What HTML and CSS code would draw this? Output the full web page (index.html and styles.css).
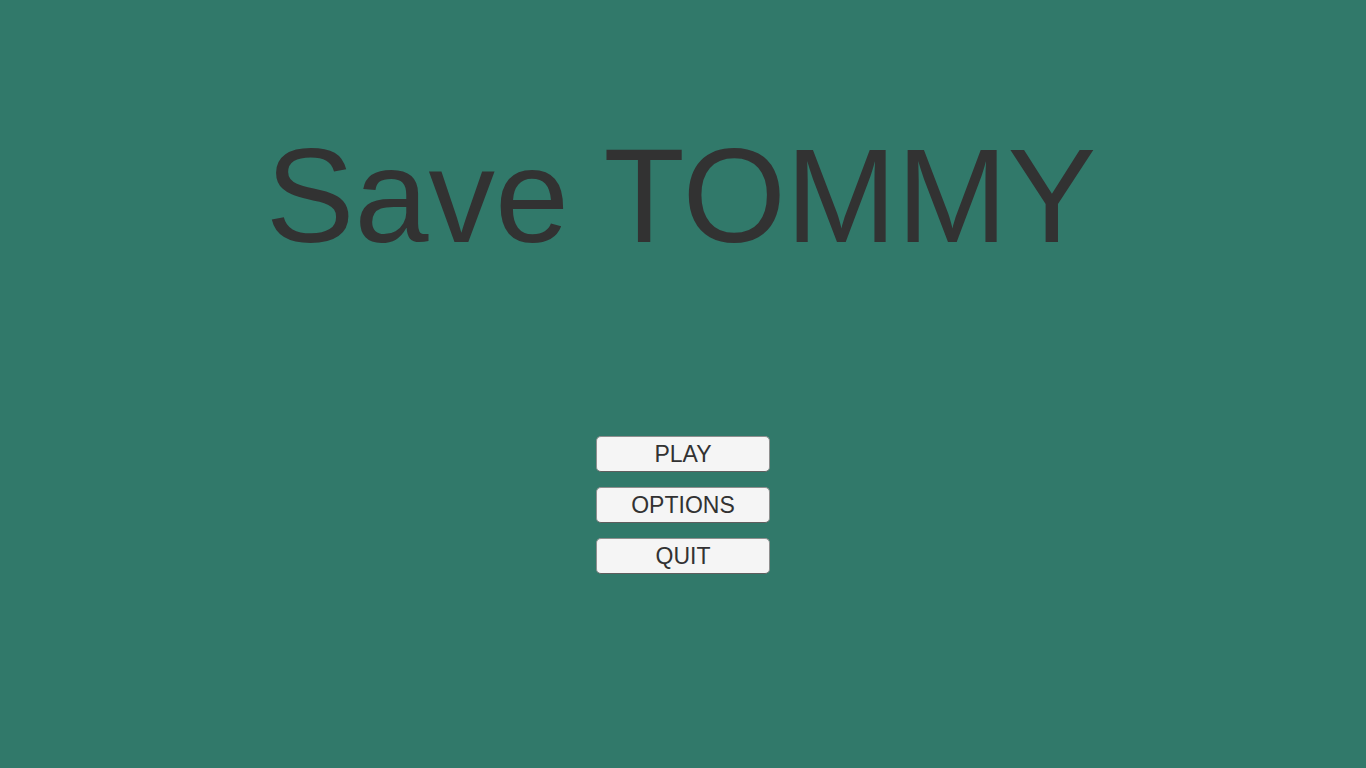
FILE: index.html
```html
<!DOCTYPE html>
<html>
<head>
<meta charset="utf-8">
<link rel="stylesheet" href="styles.css">
</head>
<body>
<main class="screen">
  <h1 class="title">Save TOMMY</h1>
  <nav class="menu">
    <button class="btn">PLAY</button>
    <button class="btn">OPTIONS</button>
    <button class="btn">QUIT</button>
  </nav>
</main>
</body>
</html>
```
FILE: styles.css
```css
html, body {
  margin: 0;
  padding: 0;
  width: 1366px;
  height: 768px;
  overflow: hidden;
  background: #31796a;
}
.screen {
  display: flex;
  flex-direction: column;
  align-items: center;
  padding-top: 130px;
  font-family: "Liberation Sans", Arial, sans-serif;
  color: #323232;
}
.title {
  margin: 0;
  font-size: 133px;
  font-weight: normal;
  line-height: 1;
  margin-left: -4px;
}
.menu {
  margin-top: 173px;
  display: flex;
  flex-direction: column;
  gap: 15px;
}
.btn {
  width: 174px;
  height: 36px;
  box-sizing: border-box;
  background: #f5f5f5;
  border: 1px solid #8f8f8f;
  border-bottom-color: #5e5e5e;
  border-radius: 5px;
  font-family: "Liberation Sans", Arial, sans-serif;
  font-size: 23px;
  color: #323232;
  padding: 0;
  margin: 0;
  line-height: 34px;
}
```
